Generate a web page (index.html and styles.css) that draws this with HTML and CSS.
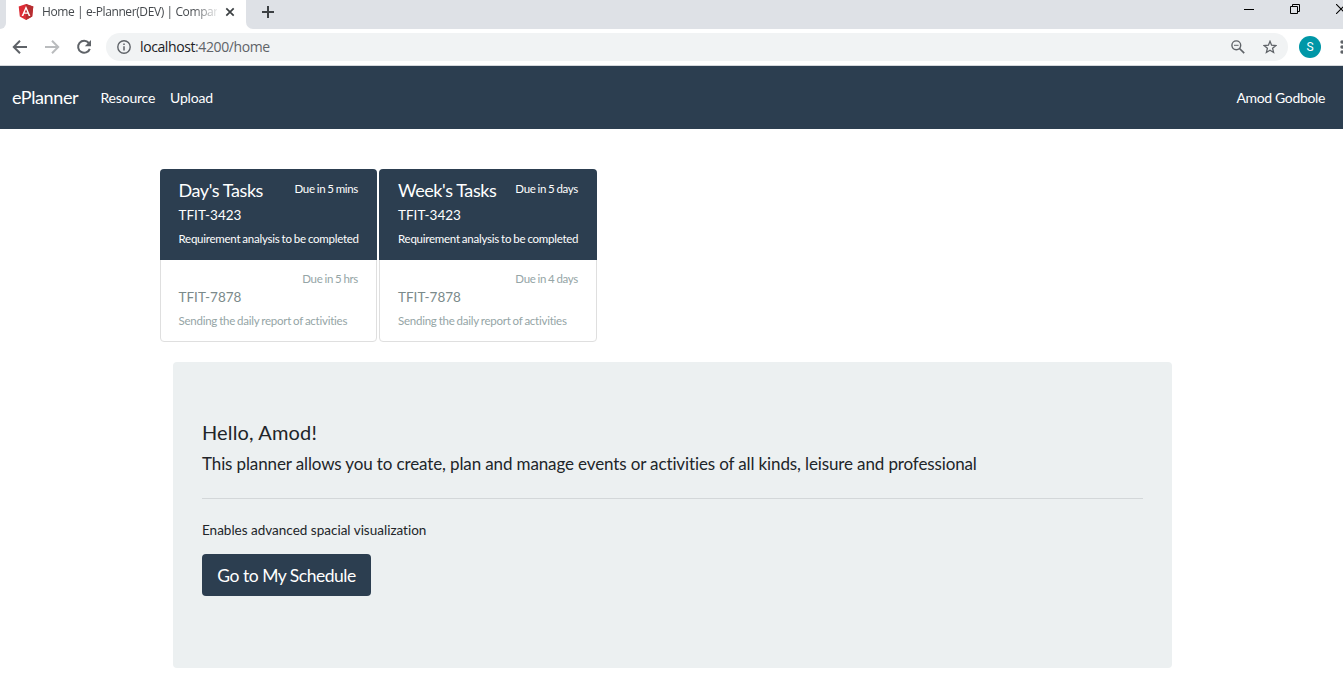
FILE: index.html
```html
<!DOCTYPE html>
<html lang="en">
<head>
<meta charset="utf-8">
<title>Home | e-Planner(DEV)</title>
<link rel="stylesheet" href="styles.css">
</head>
<body>
<div class="tabstrip">
  <div class="strip-start"></div>
  <div class="tab">
    <svg class="favicon" width="16" height="18" viewBox="0 0 16 18"><path fill="#dd2c36" d="M8 1 15.3 3.6 14.2 13.5 8 17 1.8 13.5.7 3.6z"/><path fill="#b52e31" d="M8 1 15.3 3.6 14.2 13.5 8 17z"/><path fill="#fff" fill-rule="evenodd" d="M8 3 3.6 13h1.7l.9-2.2h3.6l.9 2.2h1.7zM8 6.3 9.3 9.4H6.7z"/></svg>
    <span class="tab-title">Home | e-Planner(DEV) | Compan</span>
    <svg class="tab-close" width="10" height="10" viewBox="0 0 10 10"><path d="M1.3 1.3 8.7 8.7M8.7 1.3 1.3 8.7" stroke="#3c4043" stroke-width="1.7"/></svg>
  </div>
  <div class="strip-rest">
    <svg class="new-tab" width="12" height="12" viewBox="0 0 12 12"><path d="M6 0V12M0 6H12" stroke="#3c4043" stroke-width="2"/></svg>
    <div class="window-controls">
      <svg width="10" height="10" viewBox="0 0 10 10"><path d="M0 5.5H10" stroke="#000"/></svg>
      <svg width="10" height="10" viewBox="0 0 10 10"><path d="M.5 2.5h7v7h-7zM2.5 2V.5h7v7H8" fill="none" stroke="#000"/></svg>
      <svg width="10" height="10" viewBox="0 0 10 10"><path d="M0 0 10 10M10 0 0 10" stroke="#000" stroke-width="1.1"/></svg>
    </div>
  </div>
</div>
<div class="toolbar">
  <svg class="back" width="16" height="16" viewBox="0 0 16 16"><path d="M15 8H2.5M8 1.8 1.8 8 8 14.2" fill="none" stroke="#5f6368" stroke-width="2"/></svg>
  <svg class="forward" width="16" height="16" viewBox="0 0 16 16"><path d="M1 8H13.5M8 1.8 14.2 8 8 14.2" fill="none" stroke="#babcbe" stroke-width="2"/></svg>
  <svg class="reload" width="16" height="16" viewBox="0 0 16 16"><path d="M12.8 4A6 6 0 1 0 13.8 9.8" fill="none" stroke="#5f6368" stroke-width="2"/><path d="M15 1V7.2H8.8z" fill="#5f6368"/></svg>
  <div class="omnibox">
    <svg width="14" height="14" viewBox="0 0 14 14"><circle cx="7" cy="7" r="6.2" fill="none" stroke="#5f6368" stroke-width="1.4"/><path d="M7 6.2v4.4M7 3.4v1.5" stroke="#5f6368" stroke-width="1.5"/></svg>
    <span class="url"><b>localhost</b>:4200/home</span>
    <svg class="zoom-icon" width="14" height="14" viewBox="0 0 14 14"><circle cx="5.3" cy="5.3" r="4.4" fill="none" stroke="#5f6368" stroke-width="1.4"/><path d="M8.5 8.5 13.2 13.2" stroke="#5f6368" stroke-width="1.7"/><path d="M3 5.3h4.6" stroke="#5f6368"/></svg>
    <svg width="14" height="14" viewBox="0 0 14 14"><path d="M7 1.3 8.6 5.2 12.9 5.5 9.6 8.3 10.6 12.5 7 10.3 3.4 12.5 4.4 8.3 1.1 5.5 5.4 5.2z" fill="none" stroke="#5f6368" stroke-width="1.3"/></svg>
  </div>
  <span class="avatar">S</span>
  <svg class="menu" width="4" height="14" viewBox="0 0 4 14" fill="#5f6368"><circle cx="2" cy="2" r="1.7"/><circle cx="2" cy="7" r="1.7"/><circle cx="2" cy="12" r="1.7"/></svg>
</div>
<nav class="navbar">
  <a class="brand">ePlanner</a>
  <a class="link resource">Resource</a>
  <a class="link upload">Upload</a>
  <a class="link user">Amod Godbole</a>
</nav>
<main>
  <div class="cards">
    <section class="card day">
      <div class="task active">
        <div class="row"><h5>Day's Tasks</h5><small class="due">Due in 5 mins</small></div>
        <p>TFIT-3423</p>
        <small class="desc">Requirement analysis to be completed</small>
      </div>
      <div class="task">
        <div class="row"><small class="due">Due in 5 hrs</small></div>
        <p>TFIT-7878</p>
        <small class="desc">Sending the daily report of activities</small>
      </div>
    </section>
    <section class="card week">
      <div class="task active">
        <div class="row"><h5>Week's Tasks</h5><small class="due">Due in 5 days</small></div>
        <p>TFIT-3423</p>
        <small class="desc">Requirement analysis to be completed</small>
      </div>
      <div class="task">
        <div class="row"><small class="due">Due in 4 days</small></div>
        <p>TFIT-7878</p>
        <small class="desc">Sending the daily report of activities</small>
      </div>
    </section>
  </div>
  <section class="jumbotron">
    <h1>Hello, Amod!</h1>
    <p class="lead">This planner allows you to create, plan and manage events or activities of all kinds, leisure and professional</p>
    <hr>
    <p class="note">Enables advanced spacial visualization</p>
    <a class="button">Go to My Schedule</a>
  </section>
</main>
</body>
</html>
```

FILE: styles.css
```css
* { box-sizing: border-box; }
body {
  margin: 0;
  height: 675px;
  overflow: hidden;
  background: #fff;
  color: #212529;
  font-family: Lato, sans-serif;
  font-size: 13.5px;
  font-variant-ligatures: none;
  white-space: nowrap;
}
svg { display: block; flex: none; }
h1, h5, p { margin: 0; font-weight: 400; }

.tabstrip { display: flex; height: 29px; background: #fff; }
.strip-start { width: 6px; background: #dee1e6; border-bottom-right-radius: 6px; }
.strip-rest {
  display: flex;
  flex: 1;
  padding-left: 16px;
  background: #dee1e6;
  border-bottom-left-radius: 7px;
}
.tab {
  display: flex;
  align-items: center;
  width: 240px;
  height: 29px;
  padding: 0 11px 5px 12px;
}
.tab-title {
  width: 175px;
  margin-left: 8px;
  color: #45494d;
  font: 12px/18px "Open Sans", sans-serif;
  letter-spacing: -0.4px;
  -webkit-mask-image: linear-gradient(90deg, #000 150px, transparent 179px);
  mask-image: linear-gradient(90deg, #000 150px, transparent 179px);
}
.tab-close { margin-left: 8px; }
.new-tab { margin-top: 6px; }
.window-controls { display: flex; gap: 36px; margin: 4px -3px 0 auto; }

.toolbar {
  display: flex;
  align-items: center;
  height: 37px;
  padding-left: 12px;
  border-bottom: 1px solid #d5d8dc;
  background: #fff;
}
.forward, .reload { margin-left: 16px; }
.omnibox {
  display: flex;
  align-items: center;
  flex: none;
  width: 1182px;
  height: 28px;
  margin-left: 14px;
  padding: 0 11px;
  border-radius: 14px;
  background: #f1f3f4;
}
.url {
  margin-left: 9px;
  color: #5f6368;
  font: 14px/20px "Open Sans", sans-serif;
  letter-spacing: -0.4px;
}
.url b { color: #202124; font-weight: 400; }
.zoom-icon { margin: 0 18px 0 auto; }
.avatar {
  flex: none;
  width: 22px;
  height: 22px;
  margin-left: 11px;
  border-radius: 50%;
  background: #0097a7;
  color: #fff;
  font: 12px/22px Roboto, sans-serif;
  text-align: center;
}
.menu { margin-left: 19px; }

.navbar {
  display: flex;
  align-items: center;
  height: 63px;
  padding: 0 17px 0 12px;
  background: #2c3e50;
  color: #fff;
}
.brand { width: 88px; padding-bottom: 2px; font-size: 18px; letter-spacing: -0.4px; }
.link { margin-left: 0.5px; font-size: 14px; letter-spacing: -0.2px; }
.resource { width: 69px; }
.link.user { margin: 0 1px 0 auto; letter-spacing: -0.35px; }

main { padding: 40px 0 0 160px; }
.cards { display: flex; gap: 2px; }
.card {
  width: 217px;
  height: 173px;
  border: 1px solid #dfdfdf;
  border-radius: 4px;
}
.week { width: 218px; }
.task { padding: 9px 18px 9px 17.5px; color: #7b8a8b; }
.task.active {
  height: 91px;
  margin: -1px -1px 0;
  padding: 10px 19px 10px 18.5px;
  border-radius: 4px 4px 0 0;
  background: #2c3e50;
  color: #fff;
}
.week .task { padding-left: 18px; }
.week .task.active { padding-left: 19px; }
.row { display: flex; justify-content: space-between; height: 18px; }
.active .row { height: 26px; }
.row .due:only-child { margin-left: auto; }
h5 { font-size: 18px; line-height: 22px; letter-spacing: -0.42px; }
small { display: block; font-size: 11.5px; line-height: 20px; color: #95a5a6; }
.active small { color: #fff; }
.task p { line-height: 20px; }
.due { letter-spacing: -0.32px; word-spacing: -0.6px; }
.desc { margin-top: 4px; letter-spacing: -0.25px; word-spacing: -0.6px; }

.jumbotron {
  width: 999px;
  height: 306px;
  margin: 20px 0 0 13px;
  padding: 57px 29px;
  border-radius: 4px;
  background: #ecf0f1;
}
.jumbotron h1 { font-size: 20px; line-height: 26px; letter-spacing: 0.15px; }
.lead { margin-top: 5px; font-size: 17px; line-height: 28px; letter-spacing: -0.125px; }
hr { height: 1px; margin: 20px 0 21px; border: 0; background: #d3d7d9; }
.note { line-height: 20px; }
.button {
  display: block;
  width: 169px;
  height: 42px;
  margin-top: 14px;
  border-radius: 4px;
  background: #2c3e50;
  color: #fff;
  font-size: 17.5px;
  letter-spacing: -0.48px;
  line-height: 43px;
  text-align: center;
}
```
